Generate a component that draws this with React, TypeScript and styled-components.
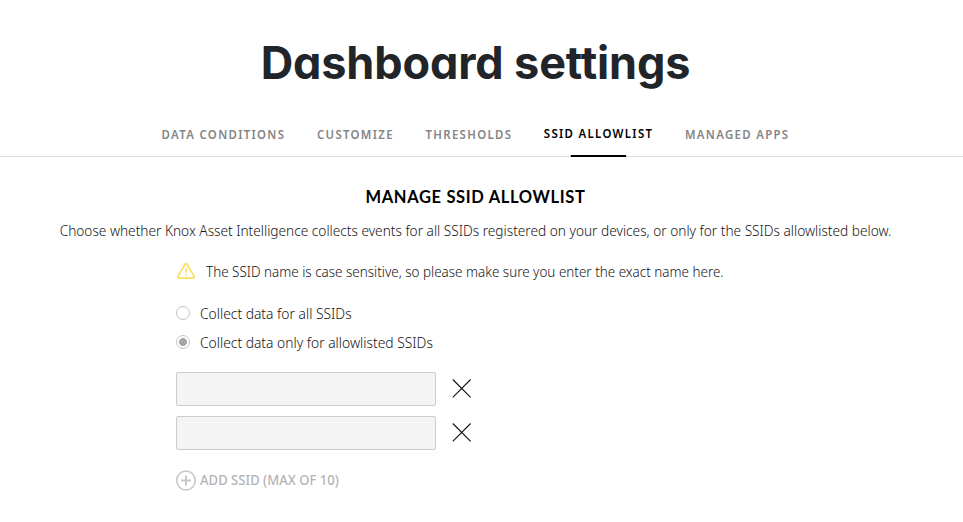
import React, { useState } from "react";
import styled, { createGlobalStyle } from "styled-components";

const GlobalStyle = createGlobalStyle`
  * { box-sizing: border-box; }
  body { margin: 0; background: #fff; color: #141414; font-family: "Noto Sans", sans-serif; }
  svg { flex: none; }
`;

const CONDENSE = 0.911;

const Page = styled.main`
  height: 522px;
  padding-top: 33px;
  overflow: hidden;
`;

const Title = styled.h1`
  width: 951px;
  margin: 0;
  text-align: center;
  font: 650 45px/60px Inter, sans-serif;
  font-feature-settings: "cv11";
  letter-spacing: -0.12px;
  color: #212529;
`;

const TabBar = styled.nav`
  height: 64px;
  padding-top: 31px;
  border-bottom: 1px solid #dedede;
`;

const TabRow = styled.div`
  display: flex;
  align-items: flex-start;
  justify-content: center;
  gap: 36px;
  width: 951px;
  transform: scaleX(0.878);
`;

const Tab = styled.button<{ $active: boolean }>`
  display: flex;
  flex: none;
  flex-direction: column;
  align-items: center;
  height: 34px;
  margin-top: ${(p) => (p.$active ? "-1px" : "0")};
  padding: 0;
  border: 0;
  background: none;
  font: 600 13px/20px "Noto Sans", sans-serif;
  letter-spacing: 1.5px;
  white-space: nowrap;
  color: ${(p) => (p.$active ? "#000" : "#858585")};

  &::after {
    content: "";
    flex: none;
    width: 50.5%;
    height: 2px;
    margin-top: 12px;
    background: ${(p) => (p.$active ? "#000" : "transparent")};
  }
`;

const Heading = styled.h2`
  width: 951px;
  margin: 30px 0 13px;
  text-align: center;
  font: 700 16.5px/20px Lato, sans-serif;
  letter-spacing: 0.65px;
  color: #000;
`;

const Intro = styled.p`
  display: flex;
  justify-content: center;
  width: 951px;
  margin: 0;
`;

const Text = styled.span<{ $origin?: string; $scale?: number }>`
  font-size: 15px;
  font-weight: 300;
  line-height: 20px;
  white-space: nowrap;
  transform: scaleX(${(p) => p.$scale || CONDENSE});
  transform-origin: ${(p) => p.$origin || "left"} center;
`;

const Form = styled.section`
  width: 700px;
  margin: 21px 0 0 176px;
`;

const Warning = styled.div`
  display: flex;
  align-items: center;
  gap: 10px;
  height: 20px;
  margin-bottom: 22px;
`;

const Option = styled.label`
  display: flex;
  align-items: center;
  gap: 10px;
  height: 20px;
  margin-bottom: 9px;
`;

const Radio = styled.input`
  appearance: none;
  width: 14px;
  height: 14px;
  margin: 0;
  border: 1px solid #c4c4c4;
  border-radius: 50%;
  background: #fff;

  &:checked {
    background: radial-gradient(circle, #a6a6a6 0 3.7px, #fff 4.3px);
  }
`;

const Fields = styled.div`
  display: flex;
  flex-direction: column;
  gap: 10px;
  margin: 20px 0;
`;

const FieldRow = styled.div`
  display: flex;
  align-items: center;
  gap: 16px;
`;

const Field = styled.input`
  width: 260px;
  height: 34px;
  border: 1px solid #ccc;
  border-radius: 2px;
  background: #f4f4f4;
`;

const IconButton = styled.button`
  display: flex;
  padding: 0;
  border: 0;
  background: none;
`;

const AddButton = styled.button`
  display: flex;
  align-items: flex-start;
  gap: 4px;
  padding: 0;
  border: 0;
  background: none;
  color: #b4b4b4;
`;

const AddLabel = styled(Text)`
  font: 500 14px/20px "Noto Sans", sans-serif;
`;

const WarningIcon = () => (
  <svg width="20" height="20" viewBox="0 0 20 20" fill="none" stroke="#fadf5c" strokeLinecap="round" strokeLinejoin="round">
    <path d="M8.8 3.5 1.9 15.3Q1.3 17.1 3 17.1H17Q18.7 17.1 18.1 15.3L11.2 3.5Q10 1.8 8.8 3.5Z" strokeWidth="1.6" />
    <path d="M10 7.2v4.3M10 13.7v.3" strokeWidth="1.5" />
  </svg>
);

const RemoveIcon = () => (
  <svg width="20" height="20" viewBox="0 0 20 20" stroke="#111" strokeWidth="1.1">
    <path d="M.8 .5 18.6 18.3M18.6 .5 .8 18.3" />
  </svg>
);

const AddIcon = () => (
  <svg width="20" height="21" viewBox="0 0 20 21" fill="none" stroke="#c8c8c8">
    <ellipse cx="10" cy="10.5" rx="9.2" ry="9.5" strokeWidth="1.6" />
    <path d="M10 5.5v10M5 10.5h10" strokeWidth="2" />
  </svg>
);

const TABS = ["DATA CONDITIONS", "CUSTOMIZE", "THRESHOLDS", "SSID ALLOWLIST", "MANAGED APPS"];
const OPTIONS = ["Collect data for all SSIDs", "Collect data only for allowlisted SSIDs"];

export default function App() {
  const [tab, setTab] = useState(3);
  const [option, setOption] = useState(1);
  return (
    <Page>
      <GlobalStyle />
      <Title>Dashboard settings</Title>
      <TabBar>
        <TabRow>
          {TABS.map((name, i) => (
            <Tab key={name} $active={i === tab} onClick={() => setTab(i)}>
              {name}
            </Tab>
          ))}
        </TabRow>
      </TabBar>
      <Heading>MANAGE SSID ALLOWLIST</Heading>
      <Intro>
        <Text $origin="center">
          Choose whether Knox Asset Intelligence collects events for all SSIDs registered on your devices, or only for
          the SSIDs allowlisted below.
        </Text>
      </Intro>
      <Form>
        <Warning>
          <WarningIcon />
          <Text $scale={0.897}>The SSID name is case sensitive, so please make sure you enter the exact name here.</Text>
        </Warning>
        {OPTIONS.map((name, i) => (
          <Option key={name}>
            <Radio type="radio" name="scope" checked={i === option} onChange={() => setOption(i)} />
            <Text $scale={0.921}>{name}</Text>
          </Option>
        ))}
        <Fields>
          {[1, 2].map((n) => (
            <FieldRow key={n}>
              <Field aria-label={`SSID ${n}`} disabled />
              <IconButton aria-label="Remove">
                <RemoveIcon />
              </IconButton>
            </FieldRow>
          ))}
        </Fields>
        <AddButton>
          <AddIcon />
          <AddLabel $scale={0.935}>ADD SSID (MAX OF 10)</AddLabel>
        </AddButton>
      </Form>
    </Page>
  );
}
